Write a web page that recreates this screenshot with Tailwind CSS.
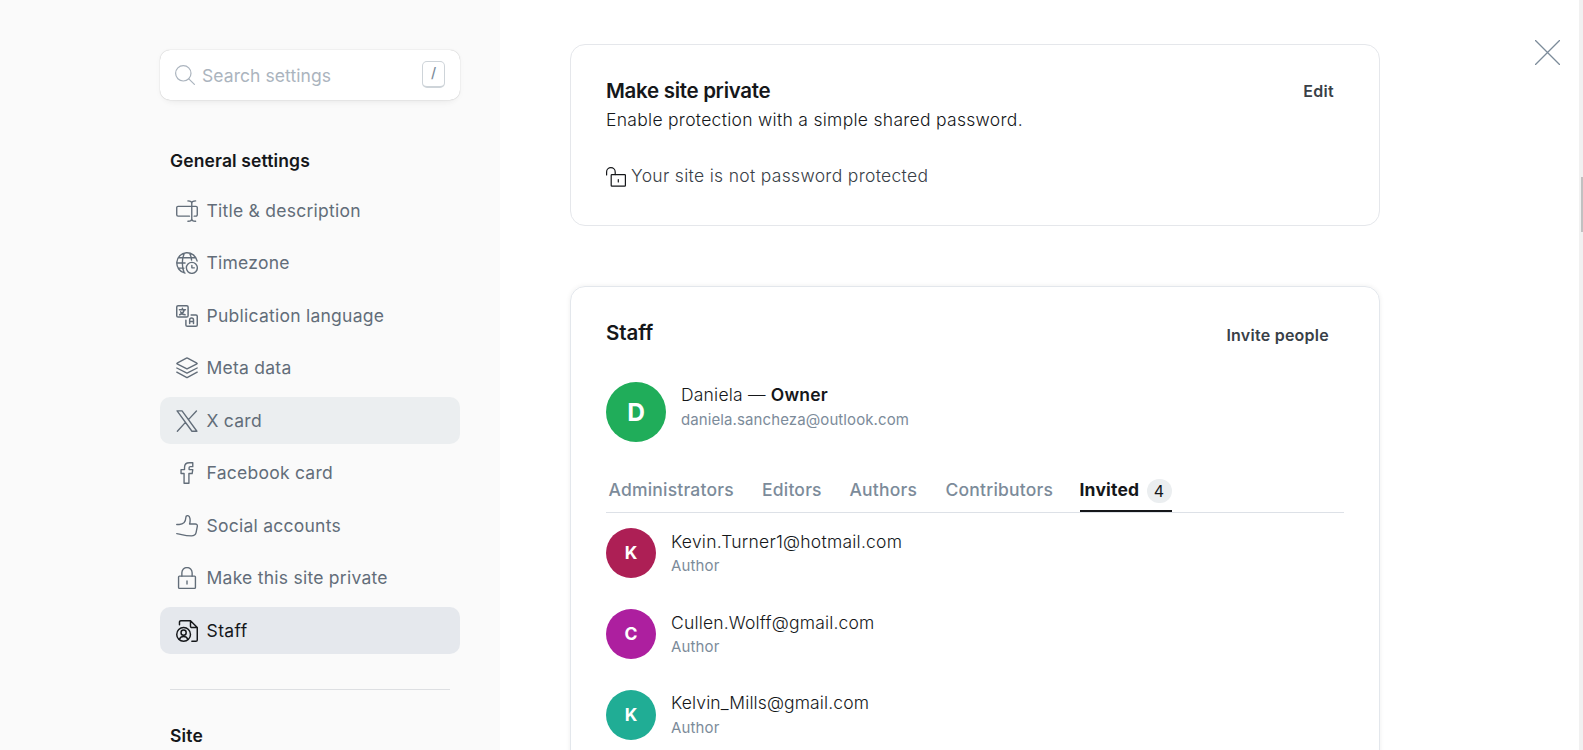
<!DOCTYPE html>
<html lang="en">
<head>
<meta charset="utf-8">
<title>Settings</title>
<script src="https://cdn.jsdelivr.net/npm/@tailwindcss/browser@4"></script>
</head>
<body class="h-[750px] overflow-hidden bg-white font-['Inter',sans-serif] text-[17.5px] leading-[26px] text-[#15171a]">
<div class="flex h-[750px] overflow-hidden">
  <aside class="h-full w-[500px] shrink-0 bg-[#fafafa] pt-[50px] pl-[160px]">
    <div class="flex h-[50px] w-[300px] items-center rounded-[10px] bg-white pr-[15px] pl-[15px] shadow-[0_0_1px_rgba(0,0,0,.32),0_1px_6px_rgba(0,0,0,.03),0_8px_10px_-8px_rgba(0,0,0,.08)]">
      <svg class="size-5 text-[#abb4be]" viewBox="0 0 20 20" fill="none" stroke="currentColor" stroke-width="1.2" stroke-linecap="round"><circle cx="8.3" cy="8.3" r="7.7"/><path d="M13.8 13.8 19.4 19.4"/></svg>
      <span class="mt-[2px] ml-[7px] tracking-[0.07px] text-[#abb4be]">Search settings</span>
      <kbd class="mb-[1px] ml-auto flex h-[27px] w-[23px] items-center justify-center rounded-[5px] border border-b-2 border-[#ced4d9] bg-white pb-[2px] font-['Inter',sans-serif] text-[14px] leading-none font-medium text-[#7c8b9a]">/</kbd>
    </div>
    <h2 class="mt-[48px] ml-[10px] font-semibold tracking-[0.12px]">General settings</h2>
    <nav class="mt-[13px] flex w-[300px] flex-col gap-[5.5px] tracking-[0.25px] text-[#626d79]">
      <a class="flex h-[47px] items-center gap-[9px] rounded-[10px] pl-[15.5px]">
        <svg class="size-[22px]" viewBox="0 0 24 24" fill="none" stroke="currentColor" stroke-width="1.5" stroke-linecap="round" stroke-linejoin="round"><path d="M14.7 17.6H2.2A1.4 1.4 0 0 1 .8 16.2V8.3a1.4 1.4 0 0 1 1.4-1.4h19.6a1.4 1.4 0 0 1 1.4 1.4v7.9a1.4 1.4 0 0 1-1.4 1.4H19.800M17.200 3.700V20.400M13 1c2.500 0 4.200 1 4.200 2.800C17.200 2 19 1 21.400 1M13 23.200c2.500 0 4.200-1 4.200-2.800 0 1.800 1.800 2.800 4.200 2.800"/></svg>
        <span>Title &amp; description</span></a>
      <a class="flex h-[47px] items-center gap-[9px] rounded-[10px] pl-[15.5px]">
        <svg class="size-[22px]" viewBox="0 0 24 24" fill="none" stroke="currentColor" stroke-width="1.5" stroke-linecap="round" stroke-linejoin="round"><circle cx="17.300" cy="17.300" r="6"/><path d="M17.300 14.600v2.700h2.700M9.800 23A11.200 11.200 0 1 1 23 9.800M9 22.700C7.700 20 6.900 16.200 6.900 12S7.800 3.700 9.300 1.200M14.700 1.200c1.200 2 2 4.700 2.300 7.600M.8 12h9.100M2.600 6.300h18.800M2.300 17.600h6.300"/></svg>
        <span>Timezone</span></a>
      <a class="flex h-[47px] items-center gap-[9px] rounded-[10px] pl-[15.5px]">
        <svg class="size-[22px]" viewBox="0 0 24 24" fill="none" stroke="currentColor" stroke-width="1.6" stroke-linecap="round" stroke-linejoin="round"><rect x=".8" y=".8" width="12.400" height="12.400" rx="1.500"/><path d="M7 3.400v1.500M3.700 5.200h6.600M9 5.400c-.6 2.400-2.500 4.500-5 5.300M5 7.400c1 1.700 2.700 3 4.900 3.300M16.500 10.800h5.200a1.500 1.500 0 0 1 1.500 1.500v9.400a1.500 1.500 0 0 1-1.500 1.500h-9.400a1.500 1.500 0 0 1-1.500-1.500v-5.200M14.900 20.300v-4a2.100 2.100 0 0 1 4.200 0v4M14.900 17.900h4.200"/></svg>
        <span>Publication language</span></a>
      <a class="flex h-[47px] items-center gap-[9px] rounded-[10px] pl-[15.5px]">
        <svg class="size-[22px]" viewBox="0 0 24 24" fill="none" stroke="currentColor" stroke-width="1.5" stroke-linecap="round" stroke-linejoin="round"><path d="M12.600 1.300 22.800 6.600a.5.500 0 0 1 0 .9l-10.200 5.300a1.300 1.300 0 0 1-1.200 0L1.200 7.500a.5.500 0 0 1 0-.9L11.400 1.300a1.300 1.300 0 0 1 1.200 0ZM.9 12l10.500 5.400a1.300 1.300 0 0 0 1.200 0L23.100 12M.9 16.500l10.500 5.700a1.300 1.300 0 0 0 1.200 0l10.500-5.700"/></svg>
        <span>Meta data</span></a>
      <a class="flex h-[47px] items-center gap-[9px] rounded-[10px] bg-[#ebeef0] pl-[15.5px]">
        <svg class="size-[22px]" viewBox="0 0 24 24" fill="none" stroke="currentColor" stroke-width="1.500" stroke-linecap="round" stroke-linejoin="round"><path d="M1.200 1h5.400l16.200 22.200h-5.400ZM10.300 13.500 1.500 23.200M22.300 1l-8.700 9.500"/></svg>
        <span>X card</span></a>
      <a class="flex h-[47px] items-center gap-[9px] rounded-[10px] pl-[15.5px]">
        <svg class="size-[22px]" viewBox="0 0 24 24" fill="none" stroke="currentColor" stroke-width="1.500" stroke-linecap="round" stroke-linejoin="round"><path d="M14.300 8.300V6.400c0-.9.500-1.300 1.300-1.300h2.700V.8h-3.800C10.800.8 9.300 3.200 9.300 6v2.300H5.500v4.300h3.300v10.600h5.300V12.600h3.500l.7-4.300Z"/></svg>
        <span>Facebook card</span></a>
      <a class="flex h-[47px] items-center gap-[9px] rounded-[10px] pl-[15.5px]">
        <svg class="size-[22px]" viewBox="0 0 24 24" fill="none" stroke="currentColor" stroke-width="1.500" stroke-linecap="round" stroke-linejoin="round"><path d="M.8 20.300c2.500 0 8.500 2.500 16 2.500 3.500 0 4.500-1.100 5.100-3.600l1.300-6.500c.4-2-.7-2.900-2.200-2.900h-6.200c.7-2 .7-4.300.4-6.200C14.800 1.300 13.700.7 12.600.7c-1.300 0-1.900 1-1.900 2.400-.2 4.300-2.900 7.200-7.200 7.200H.8"/></svg>
        <span>Social accounts</span></a>
      <a class="flex h-[47px] items-center gap-[9px] rounded-[10px] pl-[15.5px]">
        <svg class="size-[22px]" viewBox="0 0 24 24" fill="none" stroke="currentColor" stroke-width="1.500" stroke-linecap="round" stroke-linejoin="round"><rect x="2.800" y="10" width="18.400" height="13.300" rx="1"/><path d="M6.400 10V6.200a5.600 5.600 0 0 1 11.200 0V10M12 15.200v3.400"/></svg>
        <span>Make this site private</span></a>
      <a class="flex h-[47px] items-center gap-[9px] rounded-[10px] bg-[#e5e8ed] pl-[15.5px] tracking-[0.4px] text-[#15171a]">
        <svg class="size-[22px]" viewBox="0 0 24 24" fill="none" stroke="currentColor" stroke-width="1.600" stroke-linecap="round" stroke-linejoin="round"><circle cx="8.300" cy="15.700" r="7.500"/><circle cx="8.300" cy="13.800" r="2.800"/><path d="M3.600 21.300c.8-2 2.600-3.200 4.700-3.200s3.900 1.200 4.700 3.200M3.800 5.300V2.300A1.500 1.500 0 0 1 5.300.8h10.500l7.400 7.400v13.500a1.500 1.500 0 0 1-1.500 1.500H17.300M15.800.8v5.900a1.500 1.500 0 0 0 1.500 1.500h5.900"/></svg>
        <span>Staff</span></a>
    </nav>
    <div class="mt-[35px] ml-[10px] w-[280px] border-t border-[#dddfe2]"></div>
    <h2 class="mt-[33px] ml-[10px] font-semibold tracking-[0.2px]">Site</h2>
  </aside>

  <main class="w-[880px] shrink-0 pt-[44px] pl-[70px]">
    <section class="h-[182px] rounded-[15px] border border-[#e5e7eb] pt-[33px] pr-[35px] pl-[35px]">
      <div class="flex items-start justify-between">
        <h3 class="text-[20.5px] font-semibold tracking-[-0.3px]">Make site private</h3>
        <button class="mr-[10px] text-[16px] font-semibold tracking-[0.3px] text-[#394047]">Edit</button>
      </div>
      <p class="mt-[3px] font-light tracking-[0.29px]">Enable protection with a simple shared password.</p>
      <div class="mt-[30px] flex items-start">
        <svg class="mt-[4px] size-5" viewBox="0 0 20 20" fill="none" stroke="currentColor" stroke-width="1.200" stroke-linecap="round" stroke-linejoin="round"><path d="M.6 8V4.900a4.300 4.300 0 0 1 8.600 0V7.600M12.300 12.500v2.500"/><rect x="5.200" y="7.600" width="14.200" height="11.600" rx=".7"/></svg>
        <span class="ml-[5px] font-light tracking-[0.32px] text-[#394047]">Your site is not password protected</span>
      </div>
    </section>

    <section class="mt-[60px] h-[520px] rounded-[15px] border border-[#e3e7ec] pt-[33px] pr-[35px] pl-[35px] shadow-[0_0_5px_rgba(0,0,0,.07)]">
      <div class="flex items-start justify-between">
        <h3 class="text-[20.5px] font-semibold tracking-[-0.1px]">Staff</h3>
        <button class="mt-[2px] mr-[15px] text-[16px] font-semibold tracking-[0.25px] text-[#394047]">Invite people</button>
      </div>
      <div class="mt-[34px] flex h-[60px]">
        <div class="flex size-[60px] items-center justify-center rounded-full bg-[#20ad5a] text-[24.5px] font-bold text-white">D</div>
        <div class="ml-[15px]">
          <div class="font-light tracking-[0.2px]">Daniela — <span class="font-semibold">Owner</span></div>
          <div class="-mt-[1px] text-[15px] tracking-[0.1px] text-[#7c8b9a]">daniela.sancheza@outlook.com</div>
        </div>
      </div>
      <div class="mt-[35px] flex h-[36px] border-b border-[#dde1e7] pl-[2.500px] font-medium tracking-[0.2px] text-[#7c8b9a]">
        <div class="w-[153.5px]">Administrators</div>
        <div class="w-[87.5px]">Editors</div>
        <div class="w-[96px]">Authors</div>
        <div class="w-[134px]">Contributors</div>
        <div class="flex h-[35px] w-[92px] justify-between border-b-2 border-[#15171a] font-bold text-[#15171a]">Invited
          <span class="mt-[2px] flex h-6 w-[25px] items-center justify-center rounded-full bg-[#ebeef0] text-[16px] font-normal">4</span>
        </div>
      </div>
      <div class="mt-[15px] flex flex-col gap-[31px]">
        <div class="flex h-[50px]">
          <div class="flex size-[50px] items-center justify-center rounded-full bg-[#ad1f55] font-bold text-white">K</div>
          <div class="mt-[1px] ml-[15px]"><div class="font-light tracking-[0.23px]">Kevin.Turner1@hotmail.com</div><div class="-mt-[2px] text-[15px] tracking-[0.15px] text-[#7c8b9a]">Author</div></div>
        </div>
        <div class="flex h-[50px]">
          <div class="flex size-[50px] items-center justify-center rounded-full bg-[#ad1f9f] font-bold text-white">C</div>
          <div class="mt-[1px] ml-[15px]"><div class="font-light tracking-[0.18px]">Cullen.Wolff@gmail.com</div><div class="-mt-[2px] text-[15px] tracking-[0.15px] text-[#7c8b9a]">Author</div></div>
        </div>
        <div class="flex h-[50px]">
          <div class="flex size-[50px] items-center justify-center rounded-full bg-[#20ad95] font-bold text-white">K</div>
          <div class="ml-[15px]"><div class="font-light tracking-[0.12px]">Kelvin_Mills@gmail.com</div><div class="-mt-[1px] text-[15px] tracking-[0.15px] text-[#7c8b9a]">Author</div></div>
        </div>
      </div>
    </section>
  </main>

  <div class="flex flex-1 items-start justify-end pt-[40px] pr-[19px]">
    <svg class="size-[25px] text-[#7c8b9a]" viewBox="0 0 25 25" fill="none" stroke="currentColor" stroke-width="1.300" stroke-linecap="round"><path d="M.5.500l24 24M24.500.500l-24 24"/></svg>
  </div>
  <div class="flex h-full w-[4px] justify-end bg-[#f1f1f1] pt-[177px]"><div class="h-[55px] w-[2px] bg-[#c1c1c1]"></div></div>
</div>
</body>
</html>
